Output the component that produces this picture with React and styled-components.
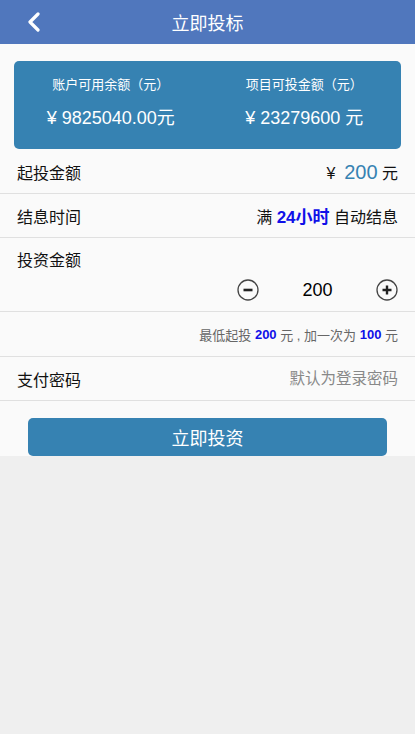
import React, { useState } from "react";
import styled, { createGlobalStyle } from "styled-components";

const GlobalStyle = createGlobalStyle`
  html, body {
    margin: 0;
    padding: 0;
    background: #efefef;
    font-family: "Liberation Sans", "Noto Sans CJK SC", sans-serif;
  }
  * { box-sizing: border-box; }
`;

const App = () => {
  const [amount, setAmount] = useState(200);

  return (
    <Page>
      <GlobalStyle />
      <Header>
        <BackButton aria-label="back">
          <svg width="14" height="20" viewBox="0 0 14 20">
            <path
              d="M11 2 L3 10 L11 18"
              fill="none"
              stroke="#fff"
              strokeWidth="3.2"
              strokeLinecap="round"
              strokeLinejoin="round"
            />
          </svg>
        </BackButton>
        <Title>立即投标</Title>
      </Header>

      <Main>
        <InfoCard>
          <InfoCol>
            <InfoLabel>账户可用余额（元）</InfoLabel>
            <InfoValue>¥&nbsp;9825040.00元</InfoValue>
          </InfoCol>
          <InfoCol>
            <InfoLabel>项目可投金额（元）</InfoLabel>
            <InfoValue>¥&nbsp;23279600&nbsp;元</InfoValue>
          </InfoCol>
        </InfoCard>

        <Row>
          <Label>起投金额</Label>
          <Value>
            ¥&nbsp;&nbsp;<BigBlue>200</BigBlue>&nbsp;元
          </Value>
        </Row>
        <Row>
          <Label>结息时间</Label>
          <Value>
            满&nbsp;<Strong>24小时</Strong>&nbsp;自动结息
          </Value>
        </Row>
        <StepperRow>
          <Label>投资金额</Label>
          <Stepper>
            <CircleButton onClick={() => setAmount(Math.max(200, amount - 100))}>
              <svg width="22" height="22" viewBox="0 0 22 22">
                <circle cx="11" cy="11" r="10" fill="none" stroke="#444" strokeWidth="1.3" />
                <path d="M6.5 11 H15.5" stroke="#222" strokeWidth="2.6" />
              </svg>
            </CircleButton>
            <Amount>{amount}</Amount>
            <CircleButton onClick={() => setAmount(amount + 100)}>
              <svg width="22" height="22" viewBox="0 0 22 22">
                <circle cx="11" cy="11" r="10" fill="none" stroke="#444" strokeWidth="1.3" />
                <path d="M6.5 11 H15.5 M11 6.5 V15.5" stroke="#222" strokeWidth="2.4" />
              </svg>
            </CircleButton>
          </Stepper>
        </StepperRow>
        <HintRow>
          最低起投&nbsp;<HintNum>200</HintNum>&nbsp;元&nbsp;,&nbsp;加一次为&nbsp;<HintNum>100</HintNum>&nbsp;元
        </HintRow>
        <Row>
          <Label>支付密码</Label>
          <PasswordInput type="password" placeholder="默认为登录密码" />
        </Row>

        <ButtonWrap>
          <SubmitButton>立即投资</SubmitButton>
        </ButtonWrap>
      </Main>
    </Page>
  );
};

const Page = styled.div`
  min-height: 734px;
  background: #efefef;
`;

const Header = styled.header`
  position: relative;
  height: 44px;
  background: #5077bd;
  display: flex;
  align-items: center;
  justify-content: center;
`;

const BackButton = styled.button`
  position: absolute;
  left: 27px;
  top: 12px;
  padding: 0;
  border: none;
  background: none;
  display: flex;
  cursor: pointer;
`;

const Title = styled.h1`
  margin: 0;
  color: #fff;
  font-size: 18px;
  font-weight: normal;
`;

const Main = styled.div`
  background: #fafafa;
  padding-top: 17px;
`;

const InfoCard = styled.div`
  margin: 0 14px 1px;
  height: 88px;
  background: #3682b2;
  border-radius: 5px;
  display: grid;
  grid-template-columns: 1fr 1fr;
  color: #fff;
  padding-top: 14px;
`;

const InfoCol = styled.div`
  display: flex;
  flex-direction: column;
  align-items: center;
`;

const InfoLabel = styled.div`
  font-size: 13px;
  line-height: 20px;
`;

const InfoValue = styled.div`
  margin-top: 11px;
  font-size: 18px;
  line-height: 24px;
`;

const Row = styled.div`
  height: 44px;
  padding: 0 17px;
  display: flex;
  align-items: center;
  justify-content: space-between;
  border-bottom: 1px solid #e0e0e0;
  font-size: 16px;
  color: #111;
`;

const Label = styled.span`
  font-size: 16px;
  color: #111;
`;

const Value = styled.span`
  font-size: 16px;
  color: #111;
`;

const BigBlue = styled.span`
  font-size: 20px;
  color: #3682b2;
`;

const Strong = styled.b`
  font-size: 17px;
  color: #1010e8;
`;

const HintNum = styled.b`
  color: #1010e8;
`;

const StepperRow = styled.div`
  height: 74px;
  padding: 9px 17px 0;
  border-bottom: 1px solid #e0e0e0;
  display: flex;
  flex-direction: column;
`;

const Stepper = styled.div`
  align-self: flex-end;
  margin-top: 8px;
  margin-right: 0;
  display: flex;
  align-items: center;
`;

const CircleButton = styled.button`
  padding: 0;
  border: none;
  background: none;
  display: flex;
  cursor: pointer;
`;

const Amount = styled.span`
  width: 117px;
  text-align: center;
  font-size: 18px;
  color: #000;
`;

const HintRow = styled.div`
  height: 45px;
  padding: 0 17px;
  display: flex;
  align-items: center;
  justify-content: flex-end;
  border-bottom: 1px solid #e0e0e0;
  font-size: 13px;
  color: #666;
`;

const PasswordInput = styled.input`
  border: none;
  background: transparent;
  outline: none;
  text-align: right;
  font-family: inherit;
  font-size: 15.5px;
  width: 180px;
  padding: 0;
  &::placeholder {
    color: #888;
  }
`;

const ButtonWrap = styled.div`
  padding: 17px 28px 0 28px;
`;

const SubmitButton = styled.button`
  width: 100%;
  height: 38px;
  border: none;
  border-radius: 5px;
  background: #3682b2;
  color: #fff;
  font-family: inherit;
  font-size: 18px;
  cursor: pointer;
  display: block;
`;

export default App;
